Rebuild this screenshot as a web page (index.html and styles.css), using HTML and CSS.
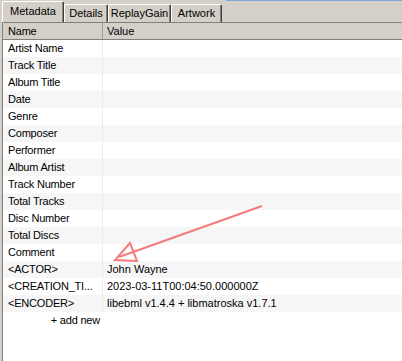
FILE: index.html
```html
<!DOCTYPE html>
<html lang="en">
<head>
    <meta charset="UTF-8">
    <title>Metadata</title>
    <link rel="stylesheet" href="styles.css">
</head>
<body>
    <div class="titlebar"></div>
    <div class="tabs">
        <div class="tab active">Metadata</div>
        <div class="tab">Details</div>
        <div class="tab">ReplayGain</div>
        <div class="tab">Artwork</div>
    </div>
    <div class="list">
        <div class="head">
            <div class="c1">Name</div>
            <div class="c2">Value</div>
        </div>
        <div class="row"><div class="c1">Artist Name</div><div class="c2"></div></div>
        <div class="row"><div class="c1">Track Title</div><div class="c2"></div></div>
        <div class="row"><div class="c1">Album Title</div><div class="c2"></div></div>
        <div class="row"><div class="c1">Date</div><div class="c2"></div></div>
        <div class="row"><div class="c1">Genre</div><div class="c2"></div></div>
        <div class="row"><div class="c1">Composer</div><div class="c2"></div></div>
        <div class="row"><div class="c1">Performer</div><div class="c2"></div></div>
        <div class="row"><div class="c1">Album Artist</div><div class="c2"></div></div>
        <div class="row"><div class="c1">Track Number</div><div class="c2"></div></div>
        <div class="row"><div class="c1">Total Tracks</div><div class="c2"></div></div>
        <div class="row"><div class="c1">Disc Number</div><div class="c2"></div></div>
        <div class="row"><div class="c1">Total Discs</div><div class="c2"></div></div>
        <div class="row"><div class="c1">Comment</div><div class="c2"></div></div>
        <div class="row"><div class="c1">&lt;ACTOR&gt;</div><div class="c2">John Wayne</div></div>
        <div class="row"><div class="c1">&lt;CREATION_TI...</div><div class="c2">2023-03-11T00:04:50.000000Z</div></div>
        <div class="row"><div class="c1">&lt;ENCODER&gt;</div><div class="c2">libebml v1.4.4 + libmatroska v1.7.1</div></div>
        <div class="addnew"><div class="c1">+ add new</div></div>
    </div>

    <!-- annotation drawn over the screenshot -->
    <svg class="arrow" width="402" height="361" viewBox="0 0 402 361">
        <line x1="262" y1="206" x2="119" y2="257" />
        <polygon points="130,243 115,260 137,261" />
    </svg>
</body>
</html>
```

FILE: styles.css
```css
body {
    margin: 0;
    background-color: #d4d0c8;
    font-family: 'Liberation Sans', Arial, sans-serif;
    font-size: 11px;
    color: #000;
    height: 361px;
    overflow: hidden;
    display: flex;
    flex-direction: column;
}

.titlebar {
    height: 1px;
    background: linear-gradient(90deg, #d4d0c8 0 226px, #7ea6d6 226px);
}

.tabs {
    height: 21px;
    display: flex;
    align-items: flex-end;
    padding-left: 2px;
}

.tab {
    height: 18px;
    line-height: 17px;
    box-sizing: border-box;
    padding: 0;
    border-top: 1px solid #fff;
    border-left: 1px solid #fff;
    border-right: 1px solid #404040;
    border-radius: 2px 2px 0 0;
    box-shadow: inset -1px 0 0 #808080;
    text-align: center;
    white-space: nowrap;
}

.tab:nth-child(1) { width: 62px; }
.tab:nth-child(2) { width: 44px; }
.tab:nth-child(3) { width: 63px; }
.tab:nth-child(4) { width: 51px; }

.tab.active {
    height: 21px;
    line-height: 19px;
}

.list {
    flex: 1;
    margin-left: 2px;
    border-left: 1px solid #808080;
    border-top: 1px solid #808080;
    background-color: #fff;
}

.head {
    display: flex;
    height: 16px;
    line-height: 16px;
    background-color: #d4d0c8;
    border-bottom: 1px solid #808080;
}

.head .c1 {
    border-right: 1px solid #a0a0a0;
}

.row {
    display: flex;
    height: 17px;
    line-height: 17px;
}

.row:nth-child(odd) {
    background-color: #f6f6f6;
}

.c1 {
    width: 100px;
    flex: none;
    box-sizing: border-box;
    padding-left: 5px;
    border-right: 1px solid #ececec;
    white-space: nowrap;
    overflow: hidden;
    letter-spacing: -0.2px;
}

.c2 {
    flex: 1;
    padding-left: 4px;
    white-space: nowrap;
}

.addnew {
    height: 17px;
    line-height: 17px;
}

.addnew .c1 {
    border-right: none;
    text-align: right;
    padding-right: 3px;
}

.arrow {
    position: absolute;
    top: 0;
    left: 0;
    pointer-events: none;
}

.arrow line,
.arrow polygon {
    stroke: #f47b7b;
    stroke-width: 2;
    fill: none;
}
```
